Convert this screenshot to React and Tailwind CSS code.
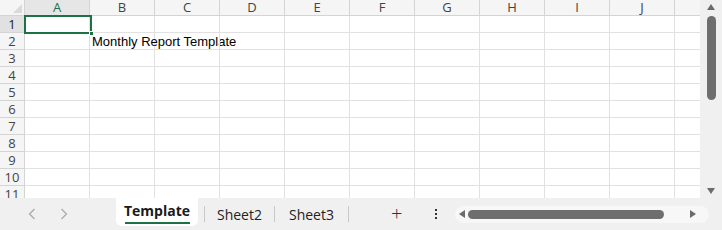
import React from "react";

const cols = ["A", "B", "C", "D", "E", "F", "G", "H", "I", "J", "K"];
const rows = [1, 2, 3, 4, 5, 6, 7, 8, 9, 10, 11, 12];

function Tri({ dir }) {
  // small filled triangles for the scrollbar arrows
  const pts = {
    up: "0,7 4,1 8,7",
    down: "0,1 8,1 4,7",
    left: "7,0 7,8 1,4",
    right: "1,0 1,8 7,4",
  };
  return (
    <svg width="8" height="8" viewBox="0 0 8 8">
      <polygon points={pts[dir]} fill="#6b6b6b" />
    </svg>
  );
}

function Chevron({ left }) {
  return (
    <svg width="8" height="12" viewBox="0 0 8 12">
      <path
        d={left ? "M6.5 1 L1.5 6 L6.5 11" : "M1.5 1 L6.5 6 L1.5 11"}
        fill="none"
        stroke="#a8a8a8"
        strokeWidth="1.2"
      />
    </svg>
  );
}

export default function App() {
  return (
    <div className="w-[722px] h-[230px] bg-white overflow-hidden flex flex-col font-['Open_Sans',sans-serif]">
      <div className="flex h-[198px]">
        {/* sheet grid */}
        <div className="relative w-[700px] overflow-hidden">
          <div className="flex h-[16px] bg-[#f5f5f5]">
            <div className="w-[25px] shrink-0 border-r border-b border-[#d4d4d4] flex items-end justify-end">
              <svg width="9" height="9" viewBox="0 0 9 9" className="mr-[2px] mb-[2px]">
                <polygon points="9,0 9,9 0,9" fill="#dadada" />
              </svg>
            </div>
            {cols.map((c) => (
              <div
                key={c}
                className={`w-[65px] shrink-0 border-r border-b border-[#d4d4d4] flex items-center justify-center text-[13px] leading-[15px] ${
                  c === "A" ? "bg-[#e6e6e6] text-[#1e7145]" : "text-[#444]"
                }`}
              >
                {c}
              </div>
            ))}
          </div>
          {rows.map((r) => (
            <div key={r} className="flex h-[17px]">
              <div
                className={`w-[25px] shrink-0 border-r border-b border-[#d4d4d4] flex items-center justify-center text-[13px] leading-[16px] ${
                  r === 1 ? "bg-[#e1e1e1] text-[#222]" : "bg-[#f5f5f5] text-[#444]"
                }`}
              >
                {r}
              </div>
              {cols.map((c) => (
                <div
                  key={c}
                  className="w-[65px] shrink-0 border-r border-b border-[#e1e1e1] relative"
                >
                  {r === 2 && c === "B" && (
                    <span className="absolute left-[2px] top-[1px] whitespace-nowrap text-[13px] leading-[15px] text-black font-['Liberation_Sans',Arial,sans-serif]">
                      Monthly Report Template
                    </span>
                  )}
                </div>
              ))}
            </div>
          ))}
          {/* active cell selection */}
          <div className="absolute left-[24px] top-[15px] w-[68px] h-[19px] border-2 border-[#1e7145]" />
          <div className="absolute left-[89px] top-[31px] w-[5px] h-[5px] bg-[#1e7145] border border-white" />
        </div>
        {/* vertical scrollbar */}
        <div className="w-[22px] bg-[#f0f0f0] flex flex-col items-center pt-[3px] pb-[3px]">
          <Tri dir="up" />
          <div className="mt-[5px] w-[9px] h-[84px] rounded-full bg-[#6e6e6e]" />
          <div className="flex-1" />
          <Tri dir="down" />
        </div>
      </div>

      {/* sheet tabs */}
      <div className="h-[32px] bg-[#f0f0f0] flex items-center text-[14px] text-[#222]">
        <div className="flex items-center w-[116px] pl-[28px] gap-[24px]">
          <Chevron left />
          <Chevron />
        </div>
        <div className="self-start h-[28px] w-[82px] bg-white rounded-b-[6px] flex flex-col items-center justify-center">
          <span className="font-bold text-[#1a1a1a] leading-[18px] mt-[1px]">Template</span>
          <div className="h-[2px] w-[65px] bg-[#1e7145] mt-[2px]" />
        </div>
        <div className="w-px h-[16px] bg-[#c8c8c8] ml-[6px]" />
        <div className="px-[12px]">Sheet2</div>
        <div className="w-px h-[16px] bg-[#c8c8c8]" />
        <div className="px-[14px]">Sheet3</div>
        <div className="w-px h-[16px] bg-[#c8c8c8]" />
        <div className="ml-[42px] text-[20px] font-light leading-none text-[#333]">+</div>
        <div className="ml-[33px] flex flex-col gap-[2px]">
          <div className="w-[2px] h-[2px] bg-[#333]" />
          <div className="w-[2px] h-[2px] bg-[#333]" />
          <div className="w-[2px] h-[2px] bg-[#333]" />
        </div>
        <div className="ml-[18px] w-[254px] h-[17px] rounded-full bg-[#f7f7f7] flex items-center pl-[3px] pr-[12px]">
          <Tri dir="left" />
          <div className="ml-[2px] w-[196px] h-[9px] rounded-full bg-[#6e6e6e]" />
          <div className="flex-1" />
          <Tri dir="right" />
        </div>
      </div>
    </div>
  );
}
